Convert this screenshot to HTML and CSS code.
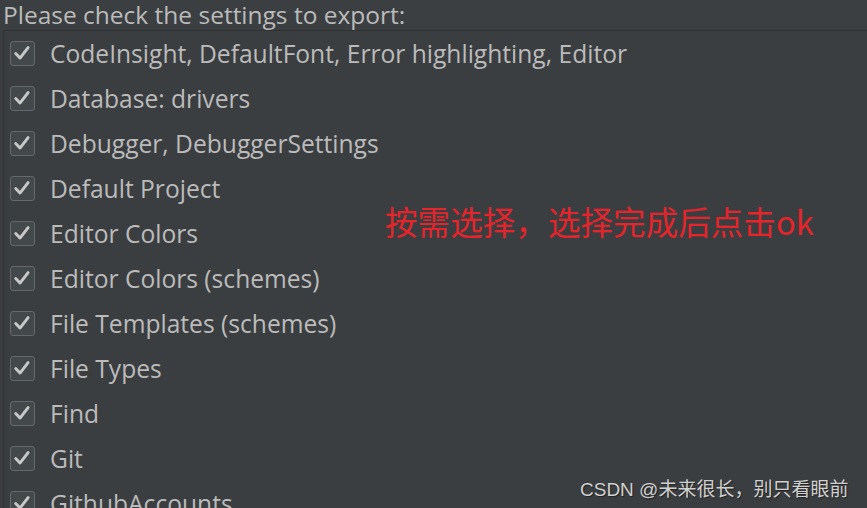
FILE: index.html
```html
<!DOCTYPE html>
<html>
<head>
<meta charset="utf-8">
<link rel="stylesheet" href="styles.css">
</head>
<body>
<div class="page">
  <div class="title">Please check the settings to export:</div>
  <div class="panel">
    <ul class="list">
      <li class="item"><span class="box"><svg viewBox="0 0 21 21"><path d="M4.5 11 L8.6 15.3 L16.3 5.3"/></svg></span><span class="label">CodeInsight, DefaultFont, Error highlighting, Editor</span></li>
      <li class="item"><span class="box"><svg viewBox="0 0 21 21"><path d="M4.5 11 L8.6 15.3 L16.3 5.3"/></svg></span><span class="label">Database: drivers</span></li>
      <li class="item"><span class="box"><svg viewBox="0 0 21 21"><path d="M4.5 11 L8.6 15.3 L16.3 5.3"/></svg></span><span class="label">Debugger, DebuggerSettings</span></li>
      <li class="item"><span class="box"><svg viewBox="0 0 21 21"><path d="M4.5 11 L8.6 15.3 L16.3 5.3"/></svg></span><span class="label">Default Project</span></li>
      <li class="item"><span class="box"><svg viewBox="0 0 21 21"><path d="M4.5 11 L8.6 15.3 L16.3 5.3"/></svg></span><span class="label">Editor Colors</span></li>
      <li class="item"><span class="box"><svg viewBox="0 0 21 21"><path d="M4.5 11 L8.6 15.3 L16.3 5.3"/></svg></span><span class="label">Editor Colors (schemes)</span></li>
      <li class="item"><span class="box"><svg viewBox="0 0 21 21"><path d="M4.5 11 L8.6 15.3 L16.3 5.3"/></svg></span><span class="label">File Templates (schemes)</span></li>
      <li class="item"><span class="box"><svg viewBox="0 0 21 21"><path d="M4.5 11 L8.6 15.3 L16.3 5.3"/></svg></span><span class="label">File Types</span></li>
      <li class="item"><span class="box"><svg viewBox="0 0 21 21"><path d="M4.5 11 L8.6 15.3 L16.3 5.3"/></svg></span><span class="label">Find</span></li>
      <li class="item"><span class="box"><svg viewBox="0 0 21 21"><path d="M4.5 11 L8.6 15.3 L16.3 5.3"/></svg></span><span class="label">Git</span></li>
      <li class="item"><span class="box"><svg viewBox="0 0 21 21"><path d="M4.5 11 L8.6 15.3 L16.3 5.3"/></svg></span><span class="label">GithubAccounts</span></li>
    </ul>
    <div class="note">按需选择，选择完成后点击ok</div>
  </div>
  <div class="watermark">CSDN @未来很长，别只看眼前</div>
</div>
</body>
</html>
```
FILE: styles.css
```css
html, body {
  margin: 0;
  padding: 0;
  background: #3c3f41;
  overflow: hidden;
}
.page {
  width: 867px;
  height: 508px;
  position: relative;
  overflow: hidden;
  font-family: "Open Sans", "Noto Sans", sans-serif;
  color: #bbbbbb;
}
.title {
  height: 30px;
  line-height: 29px;
  font-size: 24.5px;
  padding-left: 3px;
  white-space: nowrap;
}
.panel {
  margin-left: 3px;
  border-top: 1px solid #2f3133;
  border-left: 1px solid #2f3133;
  background: #3b3e40;
  height: 500px;
  position: relative;
}
.list {
  list-style: none;
  margin: 0;
  padding: 0 0 0 6px;
}
.item {
  display: flex;
  align-items: center;
  height: 45px;
  gap: 15px;
}
.box {
  width: 25px;
  height: 25px;
  box-sizing: border-box;
  border: 1.5px solid #66696b;
  border-radius: 3px;
  background: #43494a;
  display: flex;
  flex: none;
}
.box svg {
  width: 22px;
  height: 22px;
}
.box path {
  fill: none;
  stroke: #c8c8c8;
  stroke-width: 2.8;
  stroke-linecap: round;
  stroke-linejoin: round;
}
.label {
  font-size: 24.6px;
  white-space: nowrap;
}
.note {
  position: absolute;
  left: 381px;
  top: 166px;
  font-family: "Noto Sans CJK SC", sans-serif;
  font-size: 32.6px;
  color: #e5242b;
  white-space: nowrap;
}
.watermark {
  position: absolute;
  left: 580px;
  top: 474px;
  font-family: "Liberation Sans", "Noto Sans CJK SC", sans-serif;
  font-size: 19px;
  color: #d0d0d0;
  text-shadow: 1px 1px 1px #222;
  white-space: nowrap;
}
```
